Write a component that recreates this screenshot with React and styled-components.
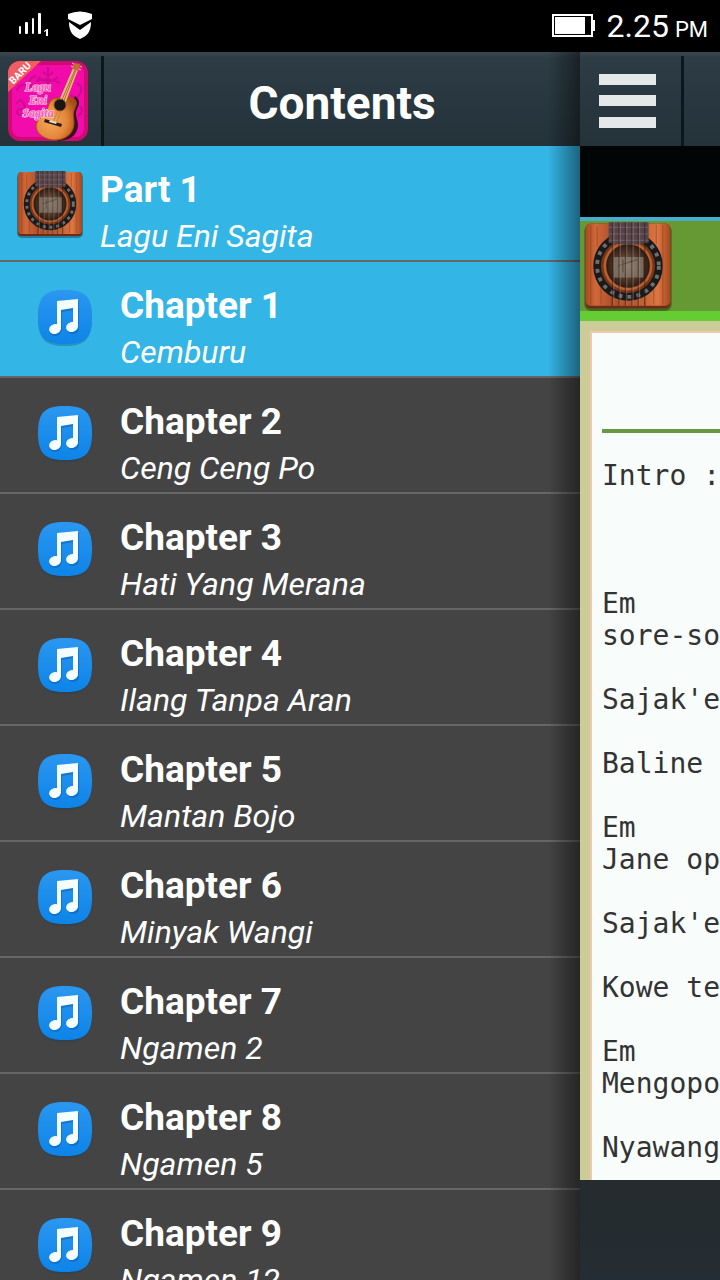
import React from 'react'
import styled, { createGlobalStyle } from 'styled-components'

const theme = {
  bar: 'linear-gradient(#3b474e 0, #2d3c45 6px, #24323a 100%)',
  divider: '#0b161d',
  active: '#33b5e5',
  row: '#444444',
  line: '#666666',
}

const GlobalStyle = createGlobalStyle`
  * {
    box-sizing: border-box;
  }

  body {
    margin: 0;
    background: #000;
    font-family: Roboto, "Liberation Sans", sans-serif;
  }
`

const Screen = styled.div`
  display: flex;
  flex-direction: column;
  height: 100vh;
  overflow: hidden;
`

const StatusBar = styled.header`
  flex: none;
  display: flex;
  justify-content: space-between;
  align-items: center;
  height: 52px;
  padding: 0 12px 0 16px;
  color: #fff;
`

const StatusGroup = styled.div`
  display: flex;
  align-items: center;
  gap: ${props => props.$gap};

  svg {
    display: block;
  }
`

const Clock = styled.time`
  padding-top: 4px;
  font-size: 32px;
  line-height: 48px;

  small {
    margin-left: 6px;
    font-size: 22px;
  }
`

const Panels = styled.div`
  flex: 1;
  display: flex;
  min-height: 0;
`

const Drawer = styled.nav`
  position: relative;
  flex: 1;
  display: flex;
  flex-direction: column;
  min-width: 0;
  overflow: hidden;

  &::after {
    content: '';
    position: absolute;
    top: 0;
    right: 0;
    bottom: 0;
    width: 32px;
    background: linear-gradient(to right, transparent, rgba(0, 0, 0, 0.45));
    pointer-events: none;
  }
`

const Bar = styled.div`
  flex: none;
  display: flex;
  height: 94px;
  padding-top: 4px;
  background: ${theme.bar};
`

const DrawerLogo = styled.div`
  flex: none;
  width: 104px;
  padding: 4px 0 0 7px;
  border-right: 3px solid ${theme.divider};
`

const DrawerTitle = styled.h1`
  flex: 1;
  margin: 0;
  padding-top: 4px;
  color: #fff;
  font-size: 46px;
  line-height: 86px;
  font-weight: 700;
  text-align: center;
`

const List = styled.ul`
  flex: 1;
  margin: 0;
  padding: 0;
  background: ${theme.row};
  list-style: none;
  overflow: hidden;
`

const Row = styled.a`
  display: flex;
  height: 116px;
  padding-left: ${props => (props.$nested ? '36px' : '16px')};
  border-bottom: 2px solid ${theme.line};
  background: ${props => (props.$active ? theme.active : theme.row)};
  color: #fff;
  text-decoration: none;
`

const RowIcon = styled.span`
  flex: none;
  width: 84px;
  padding-top: ${props => (props.$nested ? '26px' : '24px')};

  svg {
    display: block;
  }
`

const RowText = styled.span`
  display: flex;
  flex-direction: column;
  padding-top: 20px;
  white-space: nowrap;
`

const RowTitle = styled.strong`
  font-size: 37px;
  line-height: 47px;
  font-weight: 700;
`

const RowSubtitle = styled.em`
  font-size: 32px;
  line-height: 47px;
`

const Content = styled.main`
  flex: none;
  display: flex;
  flex-direction: column;
  width: 140px;
  overflow: hidden;
`

const MenuButton = styled.button`
  flex: none;
  width: 104px;
  padding: 0 0 0 18px;
  border: 0;
  border-right: 3px solid ${theme.divider};
  background: none;
  cursor: pointer;

  svg {
    display: block;
  }
`

const Gap = styled.div`
  flex: none;
  height: 71px;
  background: #020505;
`

const SongHeader = styled.div`
  flex: none;
  height: 104px;
  padding-left: 3px;
  border-top: 4px solid #45aecb;
  border-bottom: 10px solid #66cc33;
  background: #669933;

  svg {
    display: block;
  }
`

const Paper = styled.div`
  flex: 1;
  min-height: 0;
  padding: 10px 0 0 10px;
  background: #cccc99;
  overflow: hidden;
`

const Sheet = styled.article`
  min-height: 100%;
  padding: 96px 0 0 10px;
  border: 2px solid #f0c8b0;
  border-width: 2px 0 0 2px;
  background: #f8fdfc;
`

const Lyrics = styled.pre`
  margin: 0;
  padding-top: 27px;
  border-top: 4px solid #669944;
  color: #333;
  font-family: "DejaVu Sans Mono", "Liberation Mono", monospace;
  font-size: 28px;
  line-height: 32px;
`

const Footer = styled.footer`
  flex: none;
  height: 100px;
  background: linear-gradient(#252b2e, #242d33);
`

const chapters = [
  'Cemburu',
  'Ceng Ceng Po',
  'Hati Yang Merana',
  'Ilang Tanpa Aran',
  'Mantan Bojo',
  'Minyak Wangi',
  'Ngamen 2',
  'Ngamen 5',
  'Ngamen 12',
]

const lyrics = `Intro :



Em
sore-so

Sajak'e

Baline

Em
Jane op

Sajak'e

Kowe te

Em
Mengopo

Nyawang`

function Signal() {
  return (
    <svg width="34" height="28" viewBox="0 0 34 28" fill="#fff" aria-hidden="true">
      <rect x="3" y="14" width="2" height="8" rx="1" />
      <rect x="9" y="10" width="3" height="12" rx="1" />
      <rect x="16" y="6" width="2" height="16" rx="1" />
      <rect x="22" y="1" width="3" height="21" rx="1" />
      <path d="M28 19l3-2h1v7h-2v-5l-2 1z" />
    </svg>
  )
}

function Shield() {
  return (
    <svg width="26" height="32" viewBox="0 0 26 32" fill="#fff" aria-hidden="true">
      <path d="M1 4Q13-1 25 4V9L13 15 1 9Z" />
      <path d="M2 12L13 20 24 12C24 22 20 26 13 29 6 26 2 22 2 12Z" />
    </svg>
  )
}

function Battery() {
  return (
    <svg width="43" height="24" viewBox="0 0 43 24" aria-hidden="true">
      <path d="M1 1H40V22H1Z" fill="none" stroke="#fff" strokeWidth="2" />
      <path d="M3 3H33V20H3Z" fill="#fff" />
      <path d="M40 6H43V17H40Z" fill="#fff" />
    </svg>
  )
}

function AppLogo() {
  return (
    <svg width="82" height="82" viewBox="0 0 82 82" aria-label="Lagu Eni Sagita" role="img">
      <defs>
        <clipPath id="logoClip">
          <rect x="1" y="1" width="80" height="80" rx="12" />
        </clipPath>
        <radialGradient id="guitarBody" cx="0.35" cy="0.55" r="0.7">
          <stop offset="0" stopColor="#f7a95a" />
          <stop offset="0.6" stopColor="#e3863a" />
          <stop offset="1" stopColor="#a84d16" />
        </radialGradient>
      </defs>
      <g clipPath="url(#logoClip)">
        <rect width="82" height="82" fill="#cf0a72" />
        <rect x="5" y="5" width="72" height="72" rx="8" fill="#f20cab" />
        <g fill="none" stroke="#b01080" strokeWidth="2" opacity="0.6">
          <path d="M41 7v18M36 12q5 6 10 0M31 17q10 9 20 0M29 21q12-4 24 2" />
          <path d="M29 16q-8 2-6 8t8 2M22 25q-10-2-12 6M9 44q5-7 8 0t-5 5q-6 6 6 7" />
          <path d="M70 23q7 4 3 11t-9 1M73 46q5 6-2 10" />
        </g>
        <path d="M68 36Q75 41 70 49C67 55 71 58 71 66 70 76 62 81 50 81L60 60Z" fill="#3c1020" />
        <path
          d="M48 38C41 40 42 47 39 52 36 57 29 59 29 67 30 75 39 80 48 80 59 80 67 73 67 63 67 57 65 54 68 48 72 40 66 36 59 38Z"
          fill="url(#guitarBody)"
          stroke="#a74a1a"
          strokeWidth="1"
        />
        <path d="M51 43L66 8 71 10 58 44Z" fill="#f0bb78" />
        <path d="M54 42L68 10M56 43L69 10" stroke="#a86c3a" strokeWidth="1" />
        <path d="M65 9L67 3 73 4 72 11Z" fill="#c46a35" />
        <path d="M64 6l2 1M65 3l2 1M72 9l2 1M73 6l2 1" stroke="#e8c9b0" strokeWidth="1" />
        <circle cx="53" cy="45" r="6" fill="#191615" stroke="#84512a" strokeWidth="1" />
        <path d="M51 51L46 62M54 51L49 63" stroke="#c98346" strokeWidth="1" />
        <path d="M38 59l17 5-1 3-17-5z" fill="#2b1b1a" />
        <path d="M43 60l7 2-1 2-7-2z" fill="#e8d9cf" />
        <g
          fill="#f660b8"
          stroke="#ffe6f4"
          strokeWidth="1"
          paintOrder="stroke"
          fontFamily="Liberation Serif, serif"
          fontStyle="italic"
          fontWeight="700"
          fontSize="12"
          textAnchor="middle"
        >
          <text x="31" y="31">Lagu</text>
          <text x="31" y="44">Eni</text>
          <text x="31" y="57">Sagita</text>
        </g>
        <path d="M0 0H35L0 33Z" fill="#f25d62" />
        <text
          x="14"
          y="16"
          fill="#fff"
          fontFamily="Roboto, sans-serif"
          fontSize="10"
          fontWeight="700"
          textAnchor="middle"
          transform="rotate(-45 14 14)"
        >
          BARU
        </text>
      </g>
    </svg>
  )
}

function SoundHole({ size }) {
  return (
    <svg width={size} height={size} viewBox="0 0 70 70" aria-hidden="true">
      <defs>
        <linearGradient id="wood" x1="0" y1="0" x2="1" y2="0">
          <stop offset="0" stopColor="#a84a22" />
          <stop offset="0.12" stopColor="#d0683a" />
          <stop offset="0.3" stopColor="#b0522a" />
          <stop offset="0.6" stopColor="#bb592d" />
          <stop offset="0.85" stopColor="#dc7743" />
          <stop offset="1" stopColor="#a54720" />
        </linearGradient>
        <radialGradient id="hole">
          <stop offset="0" stopColor="#7d6e5e" />
          <stop offset="0.5" stopColor="#584030" />
          <stop offset="1" stopColor="#2b1710" />
        </radialGradient>
      </defs>
      <rect x="1" y="3" width="68" height="67" rx="5" fill="#000" opacity="0.3" />
      <rect x="2" y="2" width="66" height="66" rx="4" fill="#6e2c14" />
      <rect x="2" y="2" width="66" height="64" rx="4" fill="url(#wood)" />
      <g stroke="#8d3c1c" strokeWidth="1" opacity="0.45">
        <path d="M6 3V65M11 4V20M14 50V65M57 3V18M62 3V65M55 52V65M22 59V66M48 59V66" />
      </g>
      <circle cx="35" cy="35" r="24" fill="#7b3517" stroke="#1a1a1b" strokeWidth="6" />
      <circle cx="35" cy="35" r="24" fill="none" stroke="#6c6e70" strokeWidth="3" strokeDasharray="3 4" />
      <circle cx="35" cy="35" r="18" fill="url(#hole)" stroke="#b8602f" strokeWidth="2" />
      <path d="M24 28h23v16H24z" fill="#8b8274" opacity="0.7" />
      <path d="M27 35l15-5M31 40V30" stroke="#5c5047" strokeWidth="1" />
      <path d="M20 1H51V17Q35 20 20 17Z" fill="#54444a" />
      <path d="M20 5H51M20 10H51M20 15H51" stroke="#6c5a5f" strokeWidth="1" />
      <g stroke="#2a1a18" strokeWidth="1">
        <path d="M23 1V66M28 1V66M33 1V66M38 1V66M43 1V66M48 1V66" opacity="0.5" />
      </g>
      <g stroke="#a88b7c" strokeWidth="1" opacity="0.4">
        <path d="M24 1V66M29 1V66M34 1V66M39 1V66M44 1V66" />
      </g>
    </svg>
  )
}

function MusicNote() {
  return (
    <svg width="58" height="60" viewBox="0 0 58 60" aria-hidden="true">
      <defs>
        <linearGradient id="tile" x1="0" y1="0" x2="0" y2="1">
          <stop offset="0" stopColor="#2b97f0" />
          <stop offset="1" stopColor="#0d84e8" />
        </linearGradient>
      </defs>
      <path
        d="M29 4C49 4 56 9 56 30S49 58 29 58 2 51 2 30 9 4 29 4Z"
        fill="#15405f"
        opacity="0.3"
      />
      <path d="M29 2C49 2 56 8 56 29S49 56 29 56 2 50 2 29 9 2 29 2Z" fill="url(#tile)" />
      <g fill="#0b4f98" opacity="0.4" transform="translate(1 2)">
        <path d="M21 13L42 11V39H37V20L25 22V41H21Z" />
        <ellipse cx="18" cy="41" rx="6" ry="5" />
        <ellipse cx="36" cy="39" rx="6" ry="5" />
      </g>
      <g fill="#f4fdff">
        <path d="M21 13L42 11V39H37V20L25 22V41H21Z" />
        <ellipse cx="19" cy="41" rx="6" ry="5" transform="rotate(-15 19 41)" />
        <ellipse cx="36" cy="39" rx="6" ry="5" transform="rotate(-15 36 39)" />
      </g>
    </svg>
  )
}

export default function App() {
  return (
    <Screen>
      <GlobalStyle />
      <StatusBar>
        <StatusGroup $gap="17px">
          <Signal />
          <Shield />
        </StatusGroup>
        <StatusGroup $gap="12px">
          <Battery />
          <Clock>2.25<small>PM</small></Clock>
        </StatusGroup>
      </StatusBar>
      <Panels>
        <Drawer aria-label="Contents">
          <Bar>
            <DrawerLogo>
              <AppLogo />
            </DrawerLogo>
            <DrawerTitle>Contents</DrawerTitle>
          </Bar>
          <List>
            <li>
              <Row href="#part-1" $active>
                <RowIcon>
                  <SoundHole size={68} />
                </RowIcon>
                <RowText>
                  <RowTitle>Part 1</RowTitle>
                  <RowSubtitle>Lagu Eni Sagita</RowSubtitle>
                </RowText>
              </Row>
            </li>
            {chapters.map((name, i) => (
              <li key={name}>
                <Row href={`#chapter-${i + 1}`} $nested $active={i === 0}>
                  <RowIcon $nested>
                    <MusicNote />
                  </RowIcon>
                  <RowText>
                    <RowTitle>Chapter {i + 1}</RowTitle>
                    <RowSubtitle>{name}</RowSubtitle>
                  </RowText>
                </Row>
              </li>
            ))}
          </List>
        </Drawer>
        <Content>
          <Bar>
            <MenuButton type="button" aria-label="Menu">
              <svg width="58" height="54" viewBox="0 0 58 54" fill="#e4e8e8">
                <path d="M1 0H58V11H1ZM1 21H58V32H1ZM1 43H58V54H1Z" />
              </svg>
            </MenuButton>
          </Bar>
          <Gap />
          <SongHeader>
            <SoundHole size={90} />
          </SongHeader>
          <Paper>
            <Sheet>
              <Lyrics>{lyrics}</Lyrics>
            </Sheet>
          </Paper>
          <Footer />
        </Content>
      </Panels>
    </Screen>
  )
}
